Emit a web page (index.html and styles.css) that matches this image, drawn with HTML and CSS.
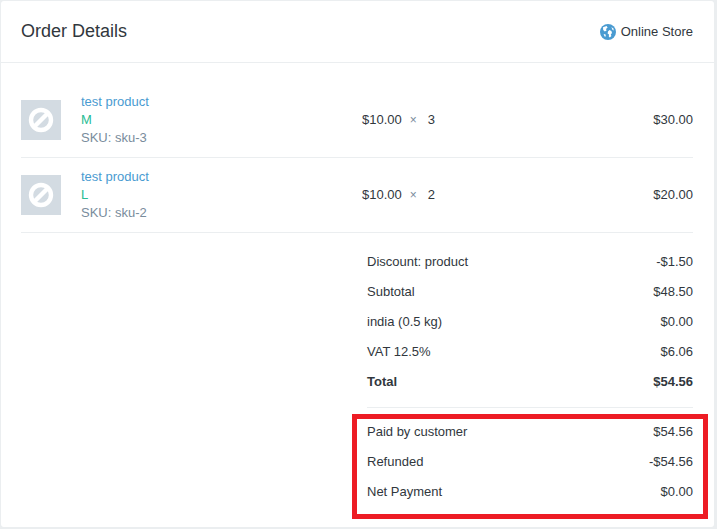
FILE: index.html
```html
<!DOCTYPE html>
<html lang="en">
<head>
    <meta charset="UTF-8">
    <meta name="viewport" content="width=device-width, initial-scale=1.0">
    <title>Order Details</title>
    <link rel="stylesheet" href="styles.css">
</head>
<body>
    <!-- order card -->
    <div class="card">
        <header class="card-head">
            <h1>Order Details</h1>
            <div class="channel">
                <svg class="globe" width="16" height="16" viewBox="0 0 16 16">
                    <circle cx="8" cy="8" r="8" fill="#4a9bd1"/>
                    <path d="M3 3.2 L6.6 2 L7.6 3.6 L6 5 L6.6 6.6 L4.8 7.4 L3.2 6 Z" fill="#fff"/>
                    <path d="M9.4 6 L11.4 7 L12 9 L10.8 10.4 L11.4 12 L9.8 13.6 L8.8 12.4 L9 10.4 L7.6 9.4 L8 7.4 Z" fill="#fff"/>
                    <path d="M11.4 3 L13 4.2 L14 6.4 L12.4 5.8 Z" fill="#fff"/>
                    <path d="M3.6 10 L5.6 10.6 L5.8 12.4 L4.6 12.4 Z" fill="#fff"/>
                </svg>
                <span>Online Store</span>
            </div>
        </header>

        <div class="card-body">
            <div class="item">
                <div class="thumb">
                    <svg width="26" height="26" viewBox="0 0 26 26">
                        <circle cx="13" cy="13" r="10" fill="none" stroke="#fff" stroke-width="4.4"/>
                        <line x1="6.5" y1="19.5" x2="19.5" y2="6.5" stroke="#fff" stroke-width="4.4"/>
                    </svg>
                </div>
                <div class="item-info">
                    <a href="#">test product</a>
                    <div class="variant">M</div>
                    <div class="sku">SKU: sku-3</div>
                </div>
                <div class="item-qty">$10.00<span class="times">×</span>3</div>
                <div class="item-total">$30.00</div>
            </div>
            <div class="item">
                <div class="thumb">
                    <svg width="26" height="26" viewBox="0 0 26 26">
                        <circle cx="13" cy="13" r="10" fill="none" stroke="#fff" stroke-width="4.4"/>
                        <line x1="6.5" y1="19.5" x2="19.5" y2="6.5" stroke="#fff" stroke-width="4.4"/>
                    </svg>
                </div>
                <div class="item-info">
                    <a href="#">test product</a>
                    <div class="variant">L</div>
                    <div class="sku">SKU: sku-2</div>
                </div>
                <div class="item-qty">$10.00<span class="times">×</span>2</div>
                <div class="item-total">$20.00</div>
            </div>

            <div class="summary">
                <div class="summary-group">
                    <div class="line"><span>Discount: product</span><span>-$1.50</span></div>
                    <div class="line"><span>Subtotal</span><span>$48.50</span></div>
                    <div class="line"><span>india (0.5 kg)</span><span>$0.00</span></div>
                    <div class="line"><span>VAT 12.5%</span><span>$6.06</span></div>
                    <div class="line total"><span>Total</span><span>$54.56</span></div>
                </div>
                <div class="summary-paid">
                    <div class="line"><span>Paid by customer</span><span>$54.56</span></div>
                    <div class="line"><span>Refunded</span><span>-$54.56</span></div>
                    <div class="line"><span>Net Payment</span><span>$0.00</span></div>
                </div>
            </div>
        </div>

        <!-- red annotation over the payment rows -->
        <div class="highlight"></div>
    </div>
</body>
</html>
```

FILE: styles.css
```css
body {
    margin: 0;
    padding: 1px 3px 2px 1px;
    background-color: #ebeef0;
    font-family: "Liberation Sans", Arial, sans-serif;
    font-size: 13px;
    color: #31373d;
}

.card {
    position: relative;
    height: 526px;
    background-color: #fff;
    border-radius: 3px;
}

/* header */
.card-head {
    display: flex;
    justify-content: space-between;
    align-items: center;
    height: 61px;
    padding: 0 21px 0 20px;
    border-bottom: 1px solid #ebeef0;
}

.card-head h1 {
    margin: 0;
    font-size: 18px;
    font-weight: 400;
}

.channel {
    display: flex;
    align-items: center;
    gap: 5px;
}

.card-body {
    padding: 20px 21px 0 20px;
}

/* line items */
.item {
    display: flex;
    align-items: center;
    height: 74px;
    border-bottom: 1px solid #ebeef0;
}

.thumb {
    display: flex;
    justify-content: center;
    align-items: center;
    width: 40px;
    height: 40px;
    background-color: #d3dbe2;
}

.item-info {
    width: 281px;
    margin-left: 20px;
    line-height: 18px;
    color: #798c9c;
}

.item-info a {
    color: #4a9bd1;
    text-decoration: none;
}

.variant {
    color: #29bc94;
}

.item-qty {
    flex: 1;
    margin-bottom: 2px;
}

.item-total {
    margin-bottom: 2px;
}

.times {
    margin: 0 11px 0 8px;
    color: #798c9c;
    font-size: 12px;
}

/* totals */
.summary {
    margin: 13px 0 0 346px;
}

.summary-group {
    padding-bottom: 11px;
    border-bottom: 1px solid #ebeef0;
}

.summary-paid {
    padding-top: 8px;
}

.line {
    display: flex;
    justify-content: space-between;
    align-items: center;
    height: 30px;
}

.total {
    font-weight: 700;
}

.highlight {
    position: absolute;
    left: 351px;
    top: 413px;
    width: 346px;
    height: 95px;
    border: 5px solid #ed1c24;
}
```
